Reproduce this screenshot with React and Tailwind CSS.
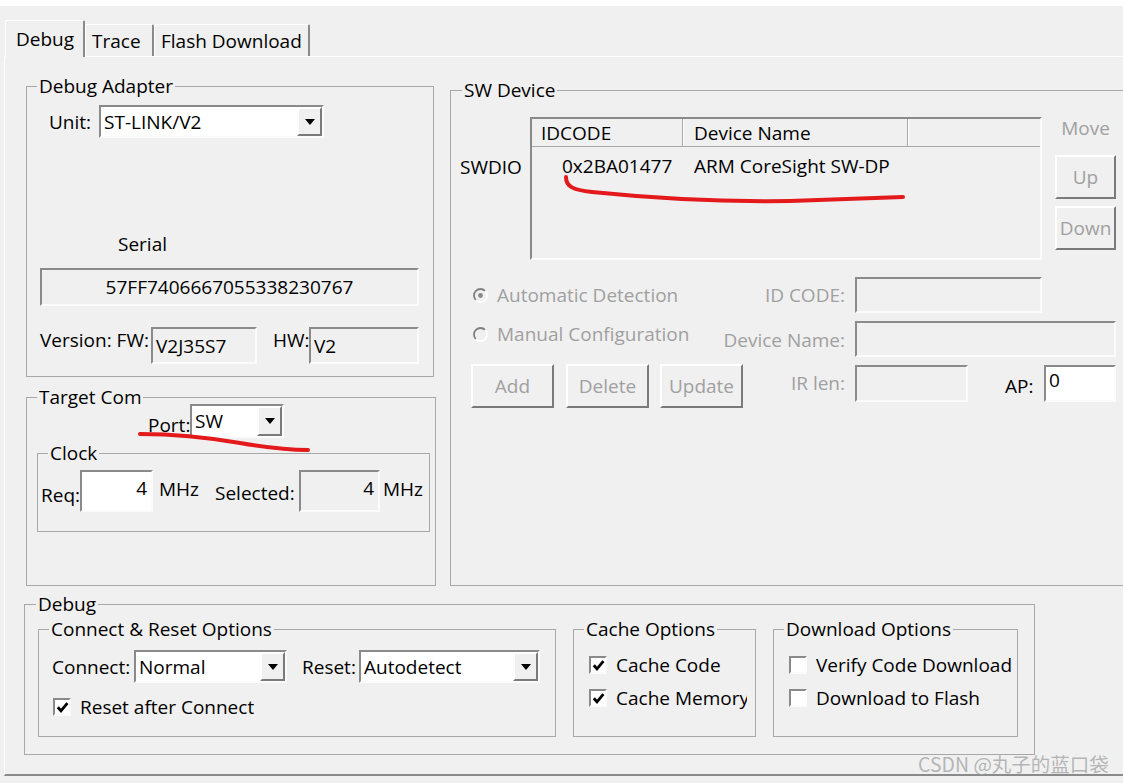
import React from "react";

const sunk =
  "border-2 border-t-[#8a8a8a] border-l-[#8a8a8a] border-b-[#fbfbfb] border-r-[#fbfbfb]";
const raised =
  "border-2 border-t-white border-l-white border-b-[#7a7a7a] border-r-[#7a7a7a] bg-[#f0f0f0]";

function Group({ title, className, legend = "ml-[10px]", children }) {
  return (
    <fieldset className={`shrink-0 border border-[#a8a8a8] ${className}`}>
      <legend className={`px-[2px] leading-[24px] ${legend}`}>{title}</legend>
      {children}
    </fieldset>
  );
}

function Combo({ value, className }) {
  return (
    <div className={`flex bg-white ${sunk} ${className}`}>
      <div className="flex-1 pl-[3px] flex items-center whitespace-nowrap">{value}</div>
      <div className={`w-[25px] flex items-center justify-center ${raised}`}>
        <svg width="10" height="6" viewBox="0 0 10 6">
          <path d="M0 0 H10 L5 6 Z" fill="#000" />
        </svg>
      </div>
    </div>
  );
}

function Check({ checked, label, textClass = "" }) {
  return (
    <div className="flex items-center">
      <div className={`w-[18px] h-[18px] bg-white shrink-0 flex items-center justify-center ${sunk}`}>
        {checked && (
          <svg width="13" height="13" viewBox="0 0 13 13">
            <polyline points="1.8,6.2 5,9.8 11.4,2.2" fill="none" stroke="#000" strokeWidth="2.8" />
          </svg>
        )}
      </div>
      <span className={`ml-[9px] whitespace-nowrap overflow-hidden ${textClass}`}>{label}</span>
    </div>
  );
}

function Radio({ checked, label }) {
  return (
    <div className="flex items-center text-[#a0a0a0]">
      <svg width="15" height="15" viewBox="0 0 15 15" className="ml-[2px] shrink-0">
        <circle cx="7.5" cy="7.5" r="6.5" fill="#f0f0f0" />
        <path d="M2.9 12.1 A6.5 6.5 0 0 1 12.1 2.9" stroke="#808080" strokeWidth="1.8" fill="none" />
        <path d="M12.1 2.9 A6.5 6.5 0 0 1 2.9 12.1" stroke="#ffffff" strokeWidth="1.8" fill="none" />
        {checked && <circle cx="7.5" cy="7.5" r="2.4" fill="#8a8a8a" />}
      </svg>
      <span className="ml-[9px] whitespace-nowrap">{label}</span>
    </div>
  );
}

function Btn({ children, className }) {
  return (
    <div className={`shrink-0 flex items-center justify-center text-[#a0a0a0] ${raised} ${className}`}>
      {children}
    </div>
  );
}

export default function App() {
  return (
    <div className="relative w-[1123px] h-[783px] overflow-hidden bg-[#f0f0f0] text-black text-[19px] leading-[24px] font-['Open_Sans',sans-serif]">
      <div className="h-[6px] bg-white" />

      {/* tabs */}
      <div className="flex items-end h-[50px] pl-[5px]">
        <div className="relative z-10 -mb-px w-[80px] h-[37px] pt-[6px] pl-[10px] bg-[#f0f0f0] border-t border-l border-white border-r-2 border-r-[#8a8a8a] rounded-t-[2px]">
          Debug
        </div>
        <div className="w-[69px] h-[32px] pt-[4px] pl-[6px] border-t border-l border-white border-r-2 border-r-[#8a8a8a] rounded-t-[2px]">
          Trace
        </div>
        <div className="w-[156px] h-[32px] pt-[4px] pl-[6px] border-t border-l border-white border-r-2 border-r-[#8a8a8a] rounded-t-[2px]">
          Flash Download
        </div>
      </div>

      {/* tab panel */}
      <div className="ml-[4px] w-[1125px] h-[720px] border-t border-l border-white border-b-2 border-b-[#8a8a8a]">
        <div className="flex">
          {/* left column */}
          <div className="ml-[21px] mt-[17px] w-[410px] shrink-0">
            <Group title="Debug Adapter" className="w-[408px] h-[303px]">
              <div className="mt-[7px] pl-[22px] flex items-center">
                <span className="w-[50px]">Unit:</span>
                <Combo value="ST-LINK/V2" className="w-[225px] h-[33px]" />
              </div>
              <div className="mt-[94px] pl-[91px]">Serial</div>
              <div className={`mt-[12px] ml-[13px] w-[379px] h-[38px] flex items-center justify-center ${sunk}`}>
                57FF7406667055338230767
              </div>
              <div className="mt-[21px] ml-[13px] flex items-start">
                <span className="w-[111px] mt-px whitespace-nowrap">Version: FW:</span>
                <div className={`w-[106px] h-[37px] pl-[3px] flex items-center ${sunk}`}>V2J35S7</div>
                <span className="ml-[16px] w-[36px] mt-px">HW:</span>
                <div className={`w-[110px] h-[37px] pl-[3px] flex items-center ${sunk}`}>V2</div>
              </div>
            </Group>

            <Group title="Target Com" className="mt-[8px] w-[410px] h-[201px]">
              <div className="-mt-[5px] ml-[121px] flex items-start">
                <span className="w-[42px] mt-[9px]">Port:</span>
                <Combo value="SW" className="w-[94px] h-[34px]" />
              </div>
              <Group title="Clock" className="mt-[3px] ml-[10px] w-[393px] h-[91px]">
                <div className="mt-[5px] ml-[3px] flex items-start">
                  <span className="w-[39px] mt-[13px]">Req:</span>
                  <div className={`w-[73px] h-[42px] bg-white pt-[4px] pr-[4px] text-right ${sunk}`}>4</div>
                  <span className="ml-[6px] mt-[7px]">MHz</span>
                  <span className="ml-[16px] w-[84px] mt-[11px]">Selected:</span>
                  <div className={`w-[81px] h-[42px] pt-[4px] pr-[4px] text-right ${sunk}`}>4</div>
                  <span className="ml-[3px] mt-[7px]">MHz</span>
                </div>
              </Group>
            </Group>
          </div>

          {/* SW device */}
          <Group title="SW Device" legend="ml-[11px]" className="ml-[14px] mt-[21px] w-[700px] h-[508px]">
            <div className="mt-[15px] flex items-start">
              <span className="ml-[9px] w-[70px] mt-[38px]">SWDIO</span>
              <div className={`w-[512px] h-[143px] bg-[#f0f0f0] ${sunk}`}>
                <div className="flex h-[28px] border-b border-b-[#a8a8a8]">
                  <div className="w-[151px] pl-[9px] flex items-center border-r border-r-[#a8a8a8] shadow-[1px_0_0_#fff]">IDCODE</div>
                  <div className="w-[225px] pl-[11px] flex items-center border-r border-r-[#a8a8a8] shadow-[1px_0_0_#fff]">Device Name</div>
                  <div className="flex-1" />
                </div>
                <div className="flex mt-[7px]">
                  <div className="w-[151px] pl-[30px]">0x2BA01477</div>
                  <div className="pl-[11px] whitespace-nowrap">ARM CoreSight SW-DP</div>
                </div>
              </div>
              <div className="ml-[13px] w-[61px] flex flex-col text-[#a0a0a0]">
                <div className="-mt-px text-center">Move</div>
                <Btn className="mt-[15px] h-[44px]">Up</Btn>
                <Btn className="mt-[7px] h-[44px]">Down</Btn>
              </div>
            </div>

            <div className="mt-[17px] pl-[20px] flex items-center h-[36px]">
              <div className="w-[234px] shrink-0">
                <Radio checked label="Automatic Detection" />
              </div>
              <span className="w-[140px] text-right text-[#a0a0a0] whitespace-nowrap">ID CODE:</span>
              <div className={`ml-[10px] w-[187px] h-[36px] ${sunk}`} />
            </div>

            <div className="mt-[8px] pl-[20px] flex items-start h-[36px]">
              <div className="w-[234px] shrink-0 mt-px">
                <Radio label="Manual Configuration" />
              </div>
              <span className="w-[140px] mt-[7px] text-right text-[#a0a0a0] whitespace-nowrap">Device Name:</span>
              <div className={`ml-[10px] w-[261px] h-[36px] ${sunk}`} />
            </div>

            <div className="mt-[7px] pl-[20px] flex items-start">
              <div className="w-[234px] shrink-0 flex">
                <Btn className="w-[83px] h-[44px]">Add</Btn>
                <Btn className="ml-[12px] w-[83px] h-[44px]">Delete</Btn>
                <Btn className="ml-[11px] w-[83px] h-[44px]">Update</Btn>
              </div>
              <span className="w-[140px] mt-[7px] text-right text-[#a0a0a0]">IR len:</span>
              <div className={`ml-[10px] mt-px w-[113px] h-[37px] ${sunk}`} />
              <span className="ml-[37px] w-[39px] mt-[10px]">AP:</span>
              <div className={`mt-px w-[72px] h-[37px] bg-white pl-[3px] pt-[1px] ${sunk}`}>0</div>
            </div>
          </Group>
        </div>

        {/* bottom debug group */}
        <Group title="Debug" legend="ml-[11px]" className="ml-[19px] mt-[6px] w-[1011px] h-[163px]">
          <div className="mt-px ml-[13px] flex items-start">
            <Group title="Connect & Reset Options" className="w-[518px] h-[120px]">
              <div className="mt-[9px] ml-[13px] flex items-center">
                <span className="w-[82px]">Connect:</span>
                <Combo value="Normal" className="w-[153px] h-[33px]" />
                <span className="ml-[15px] w-[57px]">Reset:</span>
                <Combo value="Autodetect" className="w-[181px] h-[33px]" />
              </div>
              <div className="mt-[12px] ml-[14px]">
                <Check checked label="Reset after Connect" />
              </div>
            </Group>

            <Group title="Cache Options" className="ml-[17px] w-[183px] h-[120px]">
              <div className="mt-[12px] ml-[15px]">
                <Check checked label="Cache Code" />
              </div>
              <div className="mt-[9px] ml-[15px]">
                <Check checked label="Cache Memory" textClass="w-[131px]" />
              </div>
            </Group>

            <Group title="Download Options" className="ml-[17px] w-[245px] h-[120px]">
              <div className="mt-[12px] ml-[15px]">
                <Check label="Verify Code Download" textClass="w-[196px]" />
              </div>
              <div className="mt-[9px] ml-[15px]">
                <Check label="Download to Flash" />
              </div>
            </Group>
          </div>
        </Group>
      </div>

      {/* hand-drawn red marks */}
      <svg className="absolute inset-0 pointer-events-none" width="1123" height="783" viewBox="0 0 1123 783">
        <path d="M140 434 C175 434 205 437 240 443 S290 450 308 450" fill="none" stroke="#e3191c" strokeWidth="4" strokeLinecap="round" />
        <path d="M566 177 C566 186 572 190 592 192 C660 199 720 202 790 201 L903 197" fill="none" stroke="#e3191c" strokeWidth="4" strokeLinecap="round" />
      </svg>

      {/* watermark */}
      <div className="absolute left-[918px] top-[751px] text-[19.5px] leading-[26px] text-[#9a9a9a]/70 whitespace-nowrap font-['Noto_Sans_CJK_SC',sans-serif]">
        CSDN @丸子的蓝口袋
      </div>
    </div>
  );
}
